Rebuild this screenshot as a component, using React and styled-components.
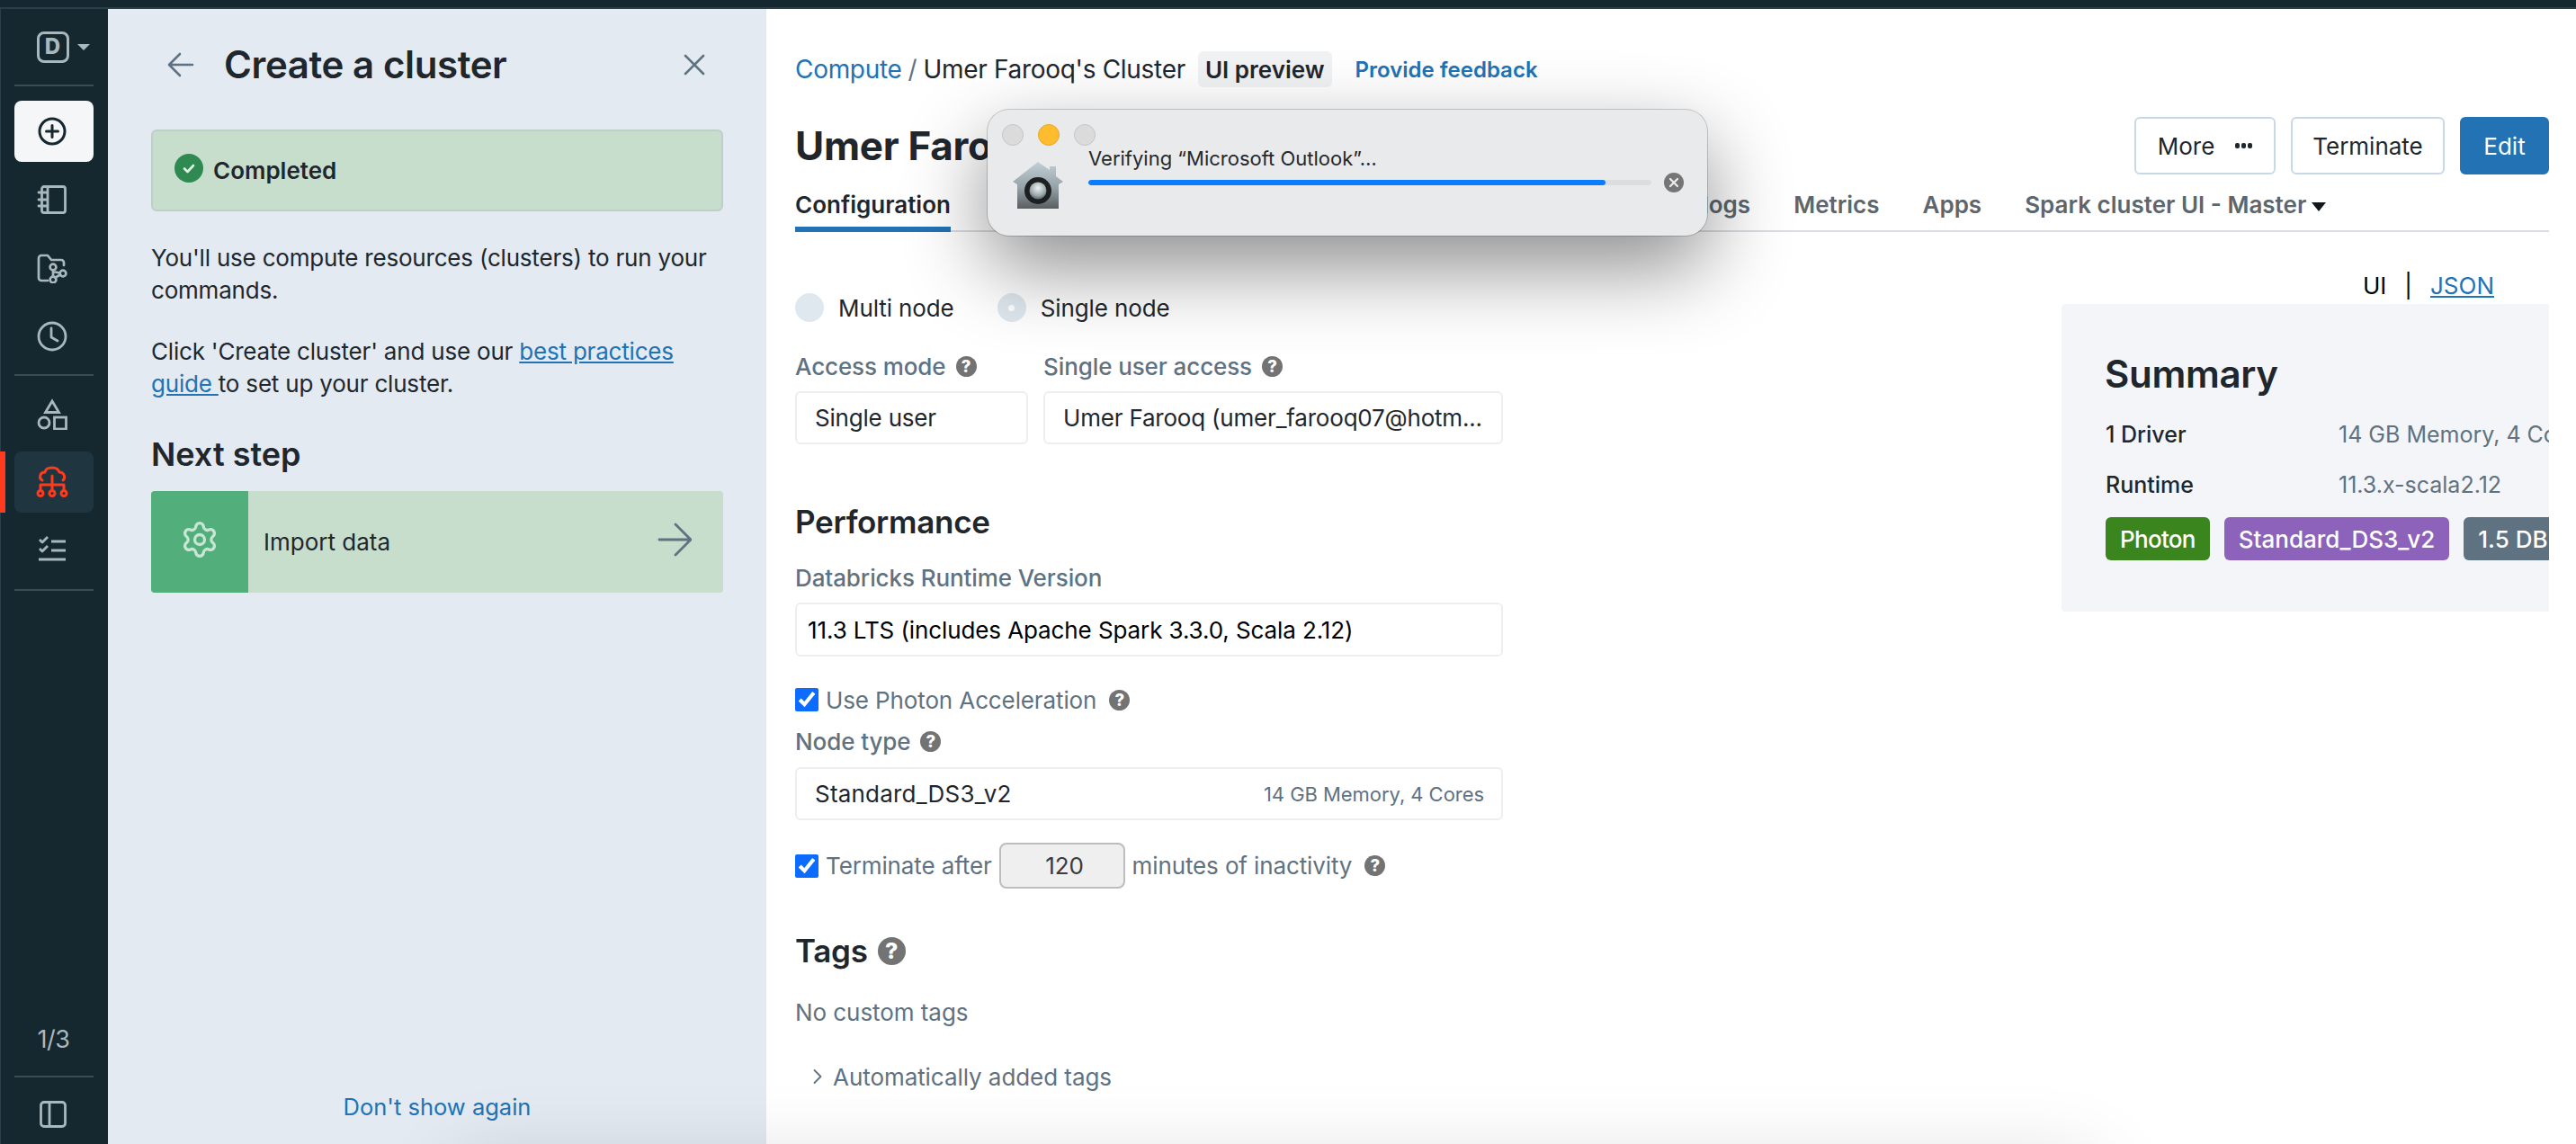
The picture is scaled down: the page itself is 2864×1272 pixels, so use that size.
import React from "react";
import styled, { createGlobalStyle } from "styled-components";
import { Settings } from "lucide-react";

const Global = createGlobalStyle`
  html, body { margin: 0; padding: 0; background: #fff; overflow: hidden; }
  body { font-family: Inter, "Liberation Sans", sans-serif; color: #1f272d; -webkit-font-smoothing: antialiased; }
  * { box-sizing: border-box; }
`;

const Page = styled.div`position: relative; width: 2864px; height: 1272px; overflow: hidden; display: flex; flex-direction: column;`;
const TopStrip = styled.div`height: 10px; flex: none; background: #15272f; border-bottom: 2px solid #2a3f48;`;
const Body = styled.div`flex: 1; display: flex; min-height: 0;`;

/* Sidebar */
const Sidebar = styled.nav`width: 120px; flex: none; background: #15272f; border-left: 1px solid #2a3f48; padding: 0 16px 0 15px; display: flex; flex-direction: column;`;
const LogoRow = styled.div`height: 84px; display: flex; align-items: center; justify-content: center; gap: 9px; padding: 0 0 0 20px;`;
const LogoBox = styled.span`width: 36px; height: 35px; border: 3px solid #a9b8bd; border-radius: 8px; display: flex; align-items: center; justify-content: center; color: #a9b8bd; font-size: 24px; font-weight: 800; line-height: 1;`;
const Caret = styled.span`width: 0; height: 0; border-left: 7px solid transparent; border-right: 7px solid transparent; border-top: 7px solid #a9b8bd;`;
const Divider = styled.div`height: 2px; flex: none; background: #3a4d55; margin-top: ${p => p.$mt || 0}px;`;
const NavGroup = styled.div`display: flex; flex-direction: column; gap: 8px; margin-top: ${p => p.$mt}px;`;
const NavItem = styled.div`
  position: relative; height: 68px; border-radius: 8px; display: flex; align-items: center; justify-content: center;
  background: ${p => p.$variant === "add" ? "#f5f6f8" : p.$variant === "active" ? "#1f3640" : "transparent"};
  color: ${p => p.$variant === "active" ? "#ff3a1f" : p.$variant === "add" ? "#15272f" : "#a9b8bd"};
  padding-right: 4px;
`;
const RedBar = styled.span`position: absolute; left: -16px; top: 0; bottom: 0; width: 6px; background: #ff3a1f;`;
const Grow = styled.div`flex: 1;`;
const Counter = styled.div`height: 60px; padding-bottom: 22px; display: flex; align-items: center; justify-content: center; color: #a9b8bd; font-size: 27px; padding-right: 1px; letter-spacing: -0.5px;`;
const ToggleRow = styled.div`height: 74px; padding-top: 8px; display: flex; align-items: center; justify-content: center; color: #a9b8bd; padding-right: 3px;`;

/* Guide panel */
const Panel = styled.aside`position: relative; width: 732px; flex: none; background: #e3eaf2; padding: 0 48px 23px; display: flex; flex-direction: column;`;
const PanelHead = styled.header`height: 134px; padding: 0 20px 10px 18px; display: flex; align-items: center; color: #5f7281;`;
const PanelTitle = styled.h1`margin: 0 0 0 33px; flex: 1; font-size: 42px; line-height: 54px; font-weight: 600; color: #1f272d; letter-spacing: -0.4px;`;
const Completed = styled.div`height: 91px; background: #c6decb; border: 2px solid #bfcdcb; border-radius: 6px; display: flex; align-items: center; gap: 11px; padding: 0 0 0 24px; font-size: 26px; font-weight: 600;`;
const CheckDot = styled.span`width: 32px; height: 32px; margin-top: -5px; border-radius: 50%; background: #2f8a52; display: flex; align-items: center; justify-content: center; color: #dff0e4;`;
const Para = styled.p`margin: ${p => p.$mt}px 0 0; font-size: 26px; line-height: 36px; color: #1f272d; letter-spacing: -0.2px;`;
const Link = styled.a`color: #2272b4; text-decoration: underline;`;
const NextTitle = styled.h2`margin: 38px 0 0; font-size: 36px; line-height: 44px; font-weight: 600;`;
const NextCard = styled.div`margin-top: 19px; height: 113px; background: #c6decb; border-radius: 4px; display: flex; align-items: center; overflow: hidden; font-size: 26px;`;
const NextIcon = styled.div`width: 108px; height: 100%; background: #52ae7b; display: flex; align-items: center; justify-content: center; color: #c9e6d4; flex: none; padding-bottom: 6px;`;
const NextLabel = styled.span`flex: 1; padding-left: 17px;`;
const NextArrow = styled.span`display: flex; color: #5f7281; margin-right: 35px; margin-top: -6px;`;
const Dismiss = styled.div`margin-top: auto; text-align: center; color: #2272b4; font-size: 25.5px; line-height: 36px;`;

/* Main */
const Main = styled.main`flex: 1; min-width: 0; padding: 0 30px 0 32px; display: flex; flex-direction: column;`;
const Crumbs = styled.div`margin-top: 47px; height: 40px; display: flex; align-items: center; font-size: 28px; letter-spacing: -0.3px;`;
const CrumbLink = styled.a`color: #2272b4;`;
const Slash = styled.span`color: #5f7281; margin: 0 7px;`;
const Chip = styled.span`margin-left: 14px; height: 40px; padding: 0 8px; border-radius: 6px; background: #f1f2f4; font-size: 26px; font-weight: 600; display: flex; align-items: center; letter-spacing: 0;`;
const Feedback = styled.a`margin-left: 26px; color: #2272b4; font-size: 24px; font-weight: 600; letter-spacing: 0;`;
const TitleRow = styled.div`margin-top: 33px; height: 64px; display: flex; align-items: center; gap: 17px;`;
const PageTitle = styled.h1`margin: 0 auto 0 0; font-size: 44px; font-weight: 700; letter-spacing: -0.3px;`;
const Btn = styled.button`
  height: 64px; width: ${p => p.$w}px; border-radius: 6px; font: inherit; font-size: 26px; display: flex; align-items: center; justify-content: center; gap: 23px;
  border: 2px solid ${p => p.$primary ? "#2272b4" : "#c9d8e6"};
  background: ${p => p.$primary ? "#2272b4" : "#fff"};
  color: ${p => p.$primary ? "#fff" : "#1f272d"};
`;
const Dots = styled.span`display: flex; gap: 2px;`;
const Dot = styled.i`width: 5px; height: 6px; border-radius: 2px; background: #1f272d;`;
const Tabs = styled.div`height: 64px; flex: none; display: flex; gap: 48px; border-bottom: 2px solid #d9dce0;`;
const Tab = styled.div`
  height: 64px; padding-top: 8px; display: flex; align-items: center; gap: 6px; font-size: 26px; font-weight: 600; white-space: nowrap;
  border-bottom: 6px solid ${p => p.$active ? "#2272b4" : "transparent"};
  color: ${p => p.$active ? "#1f272d" : "#5e666d"};
`;
const TabCaret = styled.span`width: 0; height: 0; margin-top: 5px; border-left: 8px solid transparent; border-right: 8px solid transparent; border-top: 10px solid #11171c;`;
const Columns = styled.div`display: flex; justify-content: space-between; align-items: flex-start;`;
const Form = styled.div`width: 787px; display: flex; flex-direction: column;`;
const Radios = styled.div`margin-top: 68px; height: 32px; display: flex; align-items: center; font-size: 26px; letter-spacing: -0.1px;`;
const RadioDot = styled.span`width: 32px; height: 32px; border-radius: 50%; background: #dfe8ef; display: flex; align-items: center; justify-content: center; margin-right: 16px;
  &::after { content: ""; width: 7px; height: 7px; border-radius: 50%; background: ${p => p.$on ? "#fff" : "transparent"}; }`;
const RadioText = styled.span`margin-right: 48px;`;
const AccessGrid = styled.div`margin-top: 33px; display: grid; grid-template-columns: 259px 511px; column-gap: 17px;`;
const Label = styled.div`margin-top: ${p => p.$mt || 0}px; height: 32px; display: flex; align-items: center; gap: 11px; font-size: 26px; letter-spacing: -0.1px; font-weight: 500; color: #5f7281; white-space: nowrap;`;
const Help = styled.span`width: ${p => p.$s || 23}px; height: ${p => p.$s || 23}px; flex: none; border-radius: 50%; background: #737373; color: #fff; font-size: ${p => (p.$s || 23) * 0.8}px; font-weight: 800; line-height: 1; display: flex; align-items: center; justify-content: center; letter-spacing: 0;`;
const Field = styled.div`
  margin-top: ${p => p.$mt}px; height: ${p => p.$h || 59}px; border: 2px solid #eceef1; border-radius: 6px; padding: 0 10px 0 ${p => p.$pl || 20}px;
  display: flex; align-items: center; justify-content: space-between; font-size: 26px; white-space: nowrap; letter-spacing: ${p => p.$ls || 0}px; color: ${p => p.$black ? "#000" : "#1f272d"};
`;
const FieldNote = styled.span`font-size: 22px; letter-spacing: -0.05px; color: #5f7281; padding-right: 9px;`;
const H2 = styled.h2`margin: ${p => p.$mt}px 0 0; height: 44px; display: flex; align-items: center; gap: 11px; font-size: 35px; font-weight: 600; line-height: 44px; letter-spacing: -0.3px;`;
const CheckRow = styled.label`margin-top: ${p => p.$mt}px; height: ${p => p.$h || 32}px; display: flex; align-items: center; font-size: 26px; letter-spacing: -0.12px; color: #5f7281; white-space: nowrap;`;
const Check = styled.input`width: 26px; height: 26px; margin: 0 8px 0 0; flex: none; accent-color: #0b6cff;`;
const NumBox = styled.span`width: 140px; height: 51px; margin: 0 8px; background: #efefef; border: 2px solid #bdbdbd; border-radius: 8px; display: flex; align-items: center; justify-content: center; color: #3b3b3b; padding-left: 6px;`;
const HelpGap = styled.span`margin-left: 14px; display: flex;`;
const Muted = styled.div`margin-top: ${p => p.$mt}px; height: 32px; display: flex; align-items: center; font-size: 26px; letter-spacing: -0.06px; color: #5f7281; white-space: nowrap;`;
const Chevron = styled.span`display: flex; margin: 0 12px 0 20px;`;
const Right = styled.div`width: 542px; display: flex; flex-direction: column;`;
const Switcher = styled.div`margin-top: 43px; height: 32px; padding-right: 61px; display: flex; justify-content: flex-end; align-items: center; gap: 20px; font-size: 26px; color: #000;`;
const Summary = styled.section`margin-top: 5px; height: 342px; background: #f3f5f9; border-radius: 4px 0 0 4px; padding: 55px 0 0 49px; overflow: hidden;`;
const SummaryTitle = styled.h2`margin: 0 0 0 -1px; font-size: 42px; line-height: 46px; font-weight: 600; letter-spacing: -0.3px;`;
const SummaryRow = styled.div`margin-top: ${p => p.$mt}px; height: 32px; display: flex; align-items: center; font-size: 25px; white-space: nowrap;`;
const SummaryKey = styled.span`width: 259px; flex: none; font-weight: 500;`;
const SummaryVal = styled.span`color: #5f7281;`;
const TagRow = styled.div`margin-top: 20px; display: flex; gap: 16px; white-space: nowrap;`;
const Tag = styled.span`height: 48px; padding: 0 16px; border-radius: 6px; color: #fff; background: ${p => p.$c}; font-size: 26px; letter-spacing: ${p => p.$ls || 0}px; font-weight: 500; display: flex; align-items: center; flex: none;`;

/* Overlays */
const Modal = styled.div`position: absolute; left: 1098px; top: 122px; width: 800px; height: 140px; background: #e9eaec; border-radius: 24px; padding: 16px 26px 0 16px;
  box-shadow: 0 0 0 1px rgba(0,0,0,.18), 0 35px 90px rgba(0,0,0,.45);`;
const Lights = styled.div`display: flex; gap: 16px;`;
const Light = styled.span`width: 24px; height: 24px; border-radius: 50%; background: ${p => p.$on ? "#febc2e" : "#dbdbdb"}; border: 1px solid ${p => p.$on ? "#e9a823" : "#c6c6c6"};`;
const ModalBody = styled.div`display: flex; gap: 28px; padding-left: 12px;`;
const ModalIcon = styled.span`display: flex; margin-top: 18px; flex: none;`;
const ModalCol = styled.div`flex: 1; min-width: 0;`;
const ModalText = styled.div`height: 28px; line-height: 28px; font-size: 22px; color: #26282a;`;
const BarRow = styled.div`margin-top: 2px; display: flex; align-items: center; gap: 14px;`;
const Track = styled.div`flex: 1; height: 6px; border-radius: 3px; background: #dcdddf; overflow: hidden;`;
const Fill = styled.div`height: 100%; background: #0a7dff; border-radius: 3px;`;
const Cancel = styled.span`width: 22px; height: 22px; border-radius: 50%; background: #767676; color: #eee; display: flex; align-items: center; justify-content: center; flex: none;`;
const BottomShade = styled.div`position: absolute; left: 520px; top: 1300px; width: 1800px; height: 100px; box-shadow: 0 0 90px 10px rgba(0,0,0,.14); pointer-events: none;`;

const sk = { fill: "none", stroke: "currentColor", strokeLinecap: "round", strokeLinejoin: "round" };

const AddIcon = () => (<svg width="34" height="34" viewBox="0 0 34 34" {...sk} strokeWidth="3"><circle cx="17" cy="17" r="14" /><path d="M17 10.5v13M10.5 17h13" /></svg>);
const NotebookIcon = () => (<svg width="34" height="34" viewBox="0 0 34 34" {...sk} strokeWidth="2.8"><rect x="5.5" y="2.5" width="26" height="29" rx="2.5" /><path d="M12 3v28M2 9h10M2 17h10M2 24h10" /></svg>);
const RepoIcon = () => (<svg width="34" height="34" viewBox="0 0 34 34" {...sk} strokeWidth="2.7"><path d="M12 31H5a3 3 0 0 1-3-3V6a3 3 0 0 1 3-3h7l4 5h11a3 3 0 0 1 3 3v3" /><circle cx="18" cy="16" r="3.4" /><circle cx="18" cy="30" r="3.4" /><circle cx="29" cy="23" r="3.4" /><path d="M18 19.4v7.2M20.5 21.5l5.2 1M20.5 27.5l5.6-3" /></svg>);
const ClockIcon = () => (<svg width="34" height="34" viewBox="0 0 34 34" {...sk} strokeWidth="2.8"><circle cx="17" cy="17" r="15" /><path d="M16 8v10l7 4" /></svg>);
const ShapesIcon = () => (<svg width="34" height="36" viewBox="0 0 34 36" {...sk} strokeWidth="2.8" strokeLinecap="butt" strokeLinejoin="miter"><path d="M17 4l-7.5 12.5h15z" /><circle cx="8" cy="28" r="6" /><rect x="19.5" y="22" width="13" height="13" /></svg>);
const ComputeIcon = () => (<svg width="34" height="38" viewBox="0 0 34 38" {...sk} strokeWidth="3" style={{ overflow: "visible" }}><path d="M6 17C2 15 3 8 9 8c1-5 5-5 8-5 4 0 7 2 8 5 6 0 7 7 4 9" /><path d="M17 12v16M4 22h26M4 22v6M30 22v6" /><circle cx="4" cy="31.5" r="3" /><circle cx="17" cy="31.5" r="3" /><circle cx="30" cy="31.5" r="3" /></svg>);
const TasksIcon = () => (<svg width="34" height="34" viewBox="0 0 34 34" {...sk} strokeWidth="2.8" strokeLinecap="butt"><path d="M3 5l3 3 6-6M3 15l3 3 6-6M16 7h16M16 17h16M2 27h30" /></svg>);
const ToggleIcon = () => (<svg width="30" height="30" viewBox="0 0 30 30" {...sk} strokeWidth="2.8"><rect x="1.5" y="1.5" width="27" height="27" rx="3.5" /><path d="M11 2v26" /></svg>);
const BackIcon = () => (<svg width="30" height="28" viewBox="0 0 30 28" {...sk} strokeWidth="2.6"><path d="M28 14H3M14 2L2 14l12 12" /></svg>);
const CloseIcon = () => (<svg width="24" height="24" viewBox="0 0 24 24" {...sk} strokeWidth="2.6"><path d="M2 2l20 20M22 2L2 22" /></svg>);
const TinyCheck = () => (<svg width="18" height="18" viewBox="0 0 18 18" {...sk} strokeWidth="2.6"><path d="M4 9.5l3.5 3.5L14 6" /></svg>);
const ForwardIcon = () => (<svg width="38" height="38" viewBox="0 0 38 38" {...sk} strokeWidth="2.8"><path d="M2 19h33M20 2l17 17-17 17" /></svg>);
const ChevronIcon = () => (<svg width="10" height="18" viewBox="0 0 10 18" {...sk} strokeWidth="1.8"><path d="M1.5 2l7 7-7 7" /></svg>);
const XIcon = () => (<svg width="12" height="12" viewBox="0 0 12 12" {...sk} strokeWidth="2.2"><path d="M2 2l8 8M10 2l-8 8" /></svg>);
const GateIcon = () => (
  <svg width="56" height="54" viewBox="0 0 56 54">
    <defs>
      <linearGradient id="house" x1="0" y1="0" x2="0" y2="1"><stop offset="0" stopColor="#c2d0d6" /><stop offset=".55" stopColor="#95a3a9" /><stop offset="1" stopColor="#585d60" /></linearGradient>
      <radialGradient id="knob" cx=".5" cy=".35" r=".7"><stop offset="0" stopColor="#eef1f2" /><stop offset=".6" stopColor="#a2adb1" /><stop offset="1" stopColor="#4e5a5f" /></radialGradient>
    </defs>
    <path d="M28 0l13 9V5h7v11l8 6-5 3v27H5V25l-5-3z" fill="url(#house)" />
    <circle cx="28" cy="32" r="15" fill="#1d1f20" />
    <circle cx="28" cy="32" r="9.5" fill="url(#knob)" />
  </svg>
);

export default function App() {
  return (
    <Page>
      <Global />
      <TopStrip />
      <Body>
        <Sidebar>
          <LogoRow><LogoBox>D</LogoBox><Caret /></LogoRow>
          <Divider />
          <NavGroup $mt={16}>
            <NavItem $variant="add"><AddIcon /></NavItem>
            <NavItem><NotebookIcon /></NavItem>
            <NavItem><RepoIcon /></NavItem>
            <NavItem><ClockIcon /></NavItem>
          </NavGroup>
          <Divider $mt={8} />
          <NavGroup $mt={8}>
            <NavItem><ShapesIcon /></NavItem>
            <NavItem $variant="active"><RedBar /><ComputeIcon /></NavItem>
            <NavItem><TasksIcon /></NavItem>
          </NavGroup>
          <Divider $mt={9} />
          <Grow />
          <Counter>1/3</Counter>
          <Divider />
          <ToggleRow><ToggleIcon /></ToggleRow>
        </Sidebar>

        <Panel>
          <PanelHead><BackIcon /><PanelTitle>Create a cluster</PanelTitle><CloseIcon /></PanelHead>
          <Completed><CheckDot><TinyCheck /></CheckDot>Completed</Completed>
          <Para $mt={34}>You'll use compute resources (clusters) to run your commands.</Para>
          <Para $mt={32}>Click 'Create cluster' and use our <Link>best practices guide </Link>to set up your cluster.</Para>
          <NextTitle>Next step</NextTitle>
          <NextCard>
            <NextIcon><Settings size={44} strokeWidth={1.8} /></NextIcon>
            <NextLabel>Import data</NextLabel>
            <NextArrow><ForwardIcon /></NextArrow>
          </NextCard>
          <Dismiss>Don't show again</Dismiss>
        </Panel>

        <Main>
          <Crumbs>
            <CrumbLink>Compute</CrumbLink><Slash>/</Slash><span>Umer Farooq's Cluster</span>
            <Chip>UI preview</Chip>
            <Feedback>Provide feedback</Feedback>
          </Crumbs>
          <TitleRow>
            <PageTitle>Umer Farooq's Cluster</PageTitle>
            <Btn $w={157}>More<Dots><Dot /><Dot /><Dot /></Dots></Btn>
            <Btn $w={171}>Terminate</Btn>
            <Btn $w={99} $primary>Edit</Btn>
          </TitleRow>
          <Tabs>
            <Tab $active>Configuration</Tab>
            <Tab>Notebooks (0)</Tab>
            <Tab>Libraries</Tab>
            <Tab>Event log</Tab>
            <Tab>Spark UI</Tab>
            <Tab>Driver logs</Tab>
            <Tab>Metrics</Tab>
            <Tab>Apps</Tab>
            <Tab>Spark cluster UI - Master<TabCaret /></Tab>
          </Tabs>
          <Columns>
            <Form>
              <Radios>
                <RadioDot /><RadioText>Multi node</RadioText>
                <RadioDot $on /><span>Single node</span>
              </Radios>
              <AccessGrid>
                <Label>Access mode <Help>?</Help></Label>
                <Label>Single user access <Help>?</Help></Label>
                <Field $mt={12} $ls={-0.2}>Single user</Field>
                <Field $mt={12} $ls={-0.2}>Umer Farooq (umer_farooq07@hotm...</Field>
              </AccessGrid>
              <H2 $mt={64}>Performance</H2>
              <Label $mt={24}>Databricks Runtime Version</Label>
              <Field $mt={12} $h={60} $pl={12} $ls={-0.1} $black>11.3 LTS (includes Apache Spark 3.3.0, Scala 2.12)</Field>
              <CheckRow $mt={32}><Check type="checkbox" checked readOnly />Use Photon Acceleration<HelpGap><Help>?</Help></HelpGap></CheckRow>
              <Label $mt={14}>Node type <Help>?</Help></Label>
              <Field $mt={13} $ls={0.2}>Standard_DS3_v2<FieldNote>14 GB Memory, 4 Cores</FieldNote></Field>
              <CheckRow $mt={25} $h={51}><Check type="checkbox" checked readOnly />Terminate after<NumBox>120</NumBox>minutes of inactivity<HelpGap><Help>?</Help></HelpGap></CheckRow>
              <H2 $mt={47}>Tags <Help $s={31}>?</Help></H2>
              <Muted $mt={30}>No custom tags</Muted>
              <Muted $mt={40}><Chevron><ChevronIcon /></Chevron>Automatically added tags</Muted>
            </Form>
            <Right>
              <Switcher><span>UI</span><span>|</span><Link>JSON</Link></Switcher>
              <Summary>
                <SummaryTitle>Summary</SummaryTitle>
                <SummaryRow $mt={28}><SummaryKey>1 Driver</SummaryKey><SummaryVal>14 GB Memory, 4 Cores</SummaryVal></SummaryRow>
                <SummaryRow $mt={24}><SummaryKey>Runtime</SummaryKey><SummaryVal>11.3.x-scala2.12</SummaryVal></SummaryRow>
                <TagRow>
                  <Tag $c="#3a851d" $ls={-0.7}>Photon</Tag>
                  <Tag $c="#8c62bb">Standard_DS3_v2</Tag>
                  <Tag $c="#5f7281">1.5 DBU/h</Tag>
                </TagRow>
              </Summary>
            </Right>
          </Columns>
        </Main>
      </Body>

      <BottomShade />
      <Modal>
        <Lights><Light /><Light $on /><Light /></Lights>
        <ModalBody>
          <ModalIcon><GateIcon /></ModalIcon>
          <ModalCol>
            <ModalText>Verifying “Microsoft Outlook”…</ModalText>
            <BarRow>
              <Track><Fill style={{ width: "91.8%" }} /></Track>
              <Cancel><XIcon /></Cancel>
            </BarRow>
          </ModalCol>
        </ModalBody>
      </Modal>
    </Page>
  );
}
